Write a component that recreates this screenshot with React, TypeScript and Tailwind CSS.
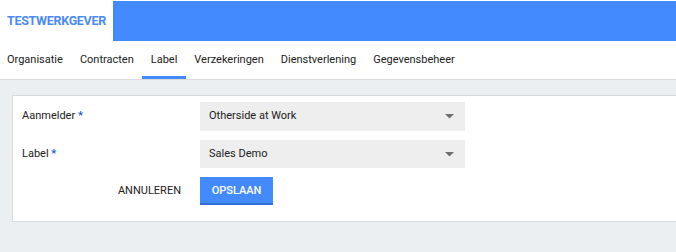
const tabs = ["Organisatie", "Contracten", "Label", "Verzekeringen", "Dienstverlening", "Gegevensbeheer"];

function Select({ value }: { value: string }) {
  return (
    <div className="flex h-full w-[265px] items-center justify-between bg-[#eeeeee] pl-[9px] pr-[11px] text-[11px] text-[#212121]">
      <span>{value}</span>
      <svg width="9" height="5" viewBox="0 0 9 5">
        <path d="M0 0h9L4.5 4.5z" fill="#6f6f6f" />
      </svg>
    </div>
  );
}

export default function App() {
  return (
    <div className="h-[252px] w-[676px] overflow-hidden bg-[#eceff2] font-['Roboto',sans-serif]">
      {/* header */}
      <div className="flex h-[41px] bg-white pt-px">
        <div className="flex w-[113px] items-center pl-[7px] text-[12.5px] font-bold tracking-[-0.3px] text-[#4a8af4]">
          TESTWERKGEVER
        </div>
        <div className="flex-1 bg-[#448aff]" />
      </div>

      {/* tabs */}
      <nav className="flex h-[39px] border-b border-[#dcdcdc] bg-white">
        <div className="-ml-[1.5px] flex">
          {tabs.map((t) => (
            <div
              key={t}
              className={
                "flex items-center border-b-[3px] px-[8.5px] pt-[4px] text-[11px] text-[#212121] " +
                (t === "Label" ? "border-[#448aff]" : "border-transparent")
              }
            >
              {t}
            </div>
          ))}
        </div>
      </nav>

      {/* form card */}
      <div className="ml-3 mt-[15px] h-[127px] border border-r-0 border-[#d7dadd] bg-white pl-[9px] pt-[6px] text-[11px] text-[#212121]">
        <div className="flex h-[29px] items-center">
          <div className="w-[178px]">
            Aanmelder <span className="font-bold text-[#1a5fd0]">*</span>
          </div>
          <Select value="Otherside at Work" />
        </div>
        <div className="mt-[9px] flex h-[28px] items-center">
          <div className="w-[178px]">
            Label <span className="font-bold text-[#1a5fd0]">*</span>
          </div>
          <Select value="Sales Demo" />
        </div>
        <div className="mt-[9px] flex h-[28px] items-center">
          <div className="flex w-[178px] justify-end pr-[19px] text-[11px] text-[#222]">ANNULEREN</div>
          <button className="h-full w-[73px] border-b-2 border-[#2f6fd8] bg-[#448aff] pt-[2px] text-[11px] font-medium text-white">
            OPSLAAN
          </button>
        </div>
      </div>
    </div>
  );
}
